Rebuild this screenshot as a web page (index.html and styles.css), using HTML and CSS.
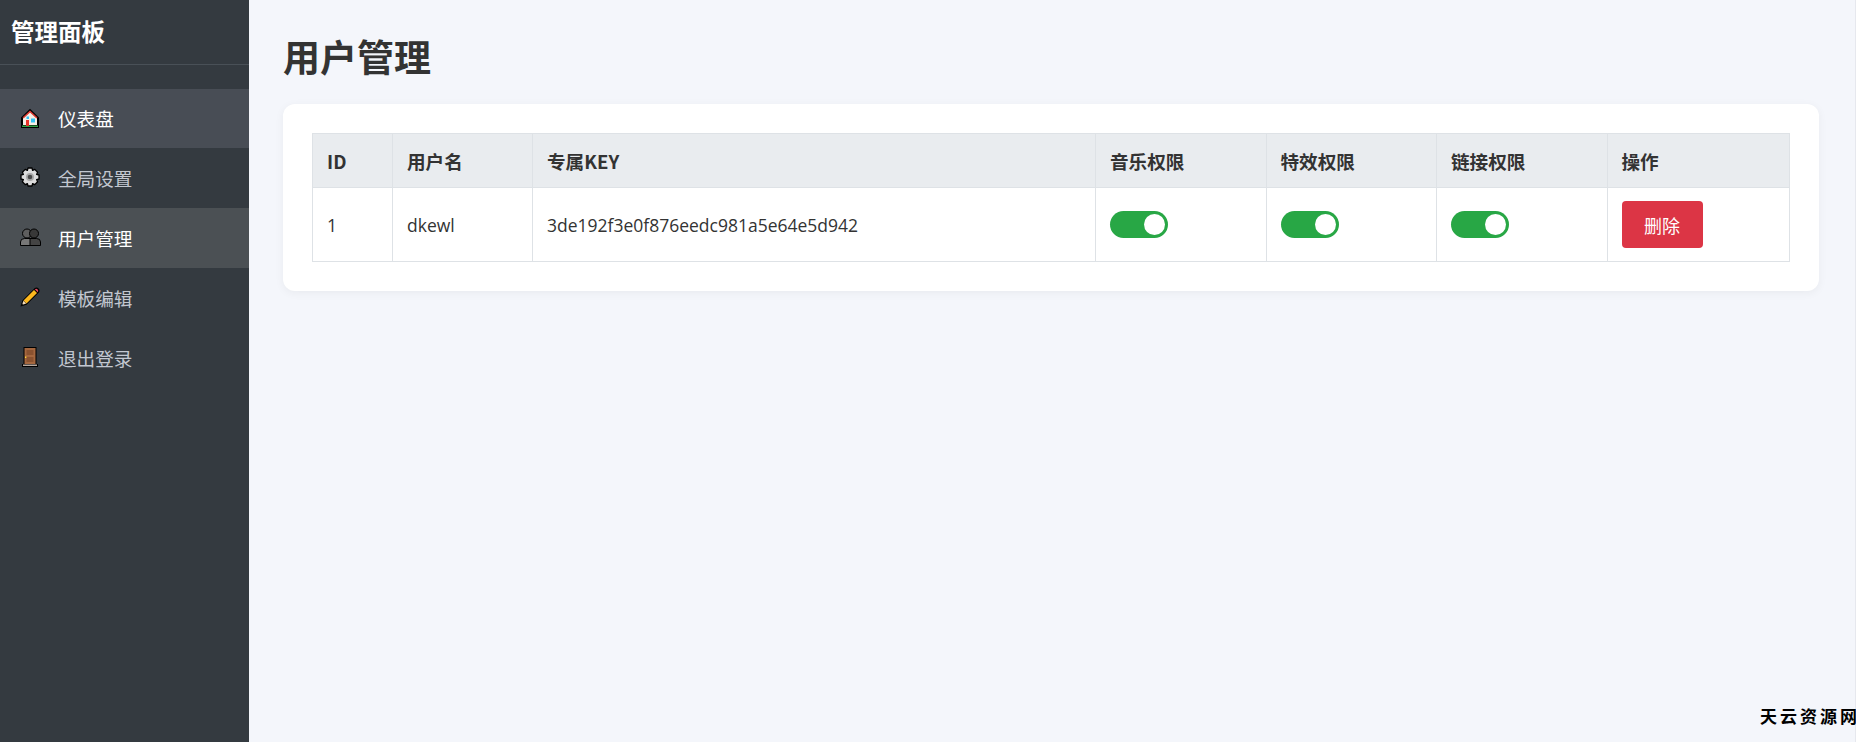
FILE: index.html
```html
<!DOCTYPE html>
<html lang="zh-CN">
<head>
<meta charset="utf-8">
<title>用户管理</title>
<link rel="stylesheet" href="styles.css">
</head>
<body>
<div class="app">
  <aside class="sidebar">
    <div class="brand">管理面板</div>
    <nav class="menu">
      <a class="item hover"><svg class="ico" viewBox="0 0 20 20"><path d="M10 .8L1 9.500V20h18V9.500z" fill="#000"/><path d="M10 3L3 9.500V17h14V9.500z" fill="#f6efe6"/><path d="M10 2.500L2.500 9.500l1 1L10 4.500l6.500 6 1-1z" fill="#d9332b"/><path d="M11 10.500h4v4h-4z" fill="#35c4f4"/><path d="M6.500 8.500h2.500v2.500H6.500z" fill="#35c4f4"/><path d="M2 17.500h16V19H2z" fill="#2f9e44"/><path d="M6 12h3v6H6z" fill="#e8332a"/></svg><span>仪表盘</span></a>
      <a class="item"><svg class="ico" viewBox="0 0 20 20"><path d="M8 1h4l.6 2.400 2.200-1 2.800 2.800-1 2.200L19 8v4l-2.400.6 1 2.200-2.800 2.800-2.200-1L12 19H8l-.6-2.400-2.200 1-2.800-2.800 1-2.200L1 12V8l2.400-.6-1-2.200 2.800-2.800 2.200 1z" fill="#dcdcdc" stroke="#000" stroke-width="1.300" stroke-linejoin="round"/><circle cx="10" cy="10" r="4" fill="#a8a8a8"/><circle cx="10" cy="10" r="2.300" fill="#4a4a4a"/></svg><span>全局设置</span></a>
      <a class="item active"><svg class="ico ico-wide" viewBox="0 0 21 18"><circle cx="7" cy="5.500" r="4.500" fill="#5e5e5e" stroke="#000"/><circle cx="14" cy="5.500" r="4.500" fill="#383838" stroke="#000"/><path d="M.5 17.500v-3.500Q.5 10.500 4.500 10.500H11V17.500z" fill="#777" stroke="#000"/><path d="M10 17.500v-7h6.500q4 0 4 3.500v3.500z" fill="#444" stroke="#000"/></svg><span>用户管理</span></a>
      <a class="item"><svg class="ico" viewBox="0 0 20 20"><path d="M.5 19.500l1.800-6L14.800 1q2-1.200 3.800.5t.4 3.900L6.500 17.800z" fill="#000"/><path d="M3.500 13.500L14 3l3 3L6.500 16.500z" fill="#fdb81e"/><path d="M14.800 2.200q1.600-.9 2.800.2t.2 2.800z" fill="#ea4a61"/><path d="M2 18l1.400-4.200 2.800 2.800z" fill="#f5dcb8"/><path d="M1.500 18.500l.7-2 1.300 1.300z" fill="#222"/></svg><span>模板编辑</span></a>
      <a class="item"><svg class="ico" viewBox="0 0 20 20"><path d="M3.500 0h13v17h1.500v3H2v-3h1.500z" fill="#000"/><path d="M4.500 1h11v16h-11z" fill="#a5673f"/><path d="M6.500 3h7v5h-7zM6.500 10h7v5h-7z" fill="#8a5230"/><path d="M5 9.500h1.300v1.500H5z" fill="#fdd835"/><path d="M3 17.500h14V19H3z" fill="#b8a9a0"/></svg><span>退出登录</span></a>
    </nav>
  </aside>
  <main class="content">
    <h1 class="title">用户管理</h1>
    <section class="card">
      <table class="users">
        <colgroup>
          <col class="c-id"><col class="c-name"><col class="c-key"><col class="c-perm"><col class="c-perm"><col class="c-perm"><col>
        </colgroup>
        <thead>
          <tr><th>ID</th><th>用户名</th><th>专属KEY</th><th>音乐权限</th><th>特效权限</th><th>链接权限</th><th>操作</th></tr>
        </thead>
        <tbody>
          <tr>
            <td>1</td>
            <td>dkewl</td>
            <td>3de192f3e0f876eedc981a5e64e5d942</td>
            <td><span class="switch"><span class="knob"></span></span></td>
            <td><span class="switch"><span class="knob"></span></span></td>
            <td><span class="switch"><span class="knob"></span></span></td>
            <td><button class="del">删除</button></td>
          </tr>
        </tbody>
      </table>
    </section>
  </main>
</div>
<div class="watermark">天云资源网</div>
</body>
</html>
```

FILE: styles.css
```css
* { box-sizing: border-box; }
html, body { margin: 0; height: 100%; overflow: hidden; }
body {
  font-family: "Noto Sans CJK SC", "Open Sans", "Noto Sans", sans-serif;
  background: #f4f6fb;
  color: #333;
  font-size: 16px;
}
.app { display: flex; height: 742px; border-right: 1px solid #e6e8ee; }
.sidebar { width: 249px; flex: none; background: #343a40; color: #fff; }
.brand {
  height: 65px;
  padding: 15px 11px 0;
  font-size: 23.500px;
  line-height: 32px;
  font-weight: 700;
  border-bottom: 1px solid #495057;
}
.menu { display: flex; flex-direction: column; padding-top: 24px; }
.item {
  display: flex;
  align-items: center;
  height: 60px;
  padding: 0 0 2px 20px;
  color: #c2c7d0;
  font-size: 18.600px;
}
.item.hover { background: #484d55; color: #fff; height: 59px; }
.item.active { background: #4b5054; color: #fff; }
.ico { width: 20px; height: 20px; flex: none; margin-right: 18px; }
.ico-wide { width: 21px; height: 18px; margin-right: 17px; }
.content { flex: 1; padding: 31px 36px 0 34px; min-width: 0; }
.title {
  margin: 0 0 23px;
  font-size: 37px;
  line-height: 50px;
  font-weight: 700;
  color: #333;
}
.card {
  background: #fff;
  border-radius: 12px;
  padding: 29px;
  box-shadow: 0 2px 10px rgba(0, 0, 0, .05);
}
.users { width: 100%; border-collapse: collapse; table-layout: fixed; }
.c-id { width: 80px; }
.c-name { width: 140px; }
.c-key { width: 563px; }
.c-perm { width: 170.500px; }
.users th, .users td {
  border: 1px solid #dee2e6;
  padding: 0 14px;
  text-align: left;
}
.users th { height: 54px; background: #e9ecef; font-weight: 700; font-size: 18.600px; }
.users td { height: 74px; font-family: "Open Sans", "Noto Sans CJK SC", sans-serif; font-size: 17.500px; }
.switch {
  display: flex;
  justify-content: flex-end;
  align-items: center;
  width: 58px;
  height: 27px;
  padding-right: 3px;
  background: #28a745;
  border-radius: 14px;
}
.knob { width: 21px; height: 21px; background: #fff; border-radius: 50%; }
.del {
  display: block;
  width: 81px;
  height: 47px;
  border: 0;
  border-radius: 4px;
  background: #dc3545;
  color: #fff;
  font-family: "Noto Sans CJK SC", sans-serif;
  font-size: 18px;
}
.watermark {
  position: absolute;
  left: 1760px;
  top: 706px;
  white-space: nowrap;
  font-size: 17px;
  line-height: 24px;
  font-weight: 700;
  letter-spacing: 3px;
  color: #000;
  font-family: "Liberation Serif", "Noto Sans CJK SC", serif;
}
```
